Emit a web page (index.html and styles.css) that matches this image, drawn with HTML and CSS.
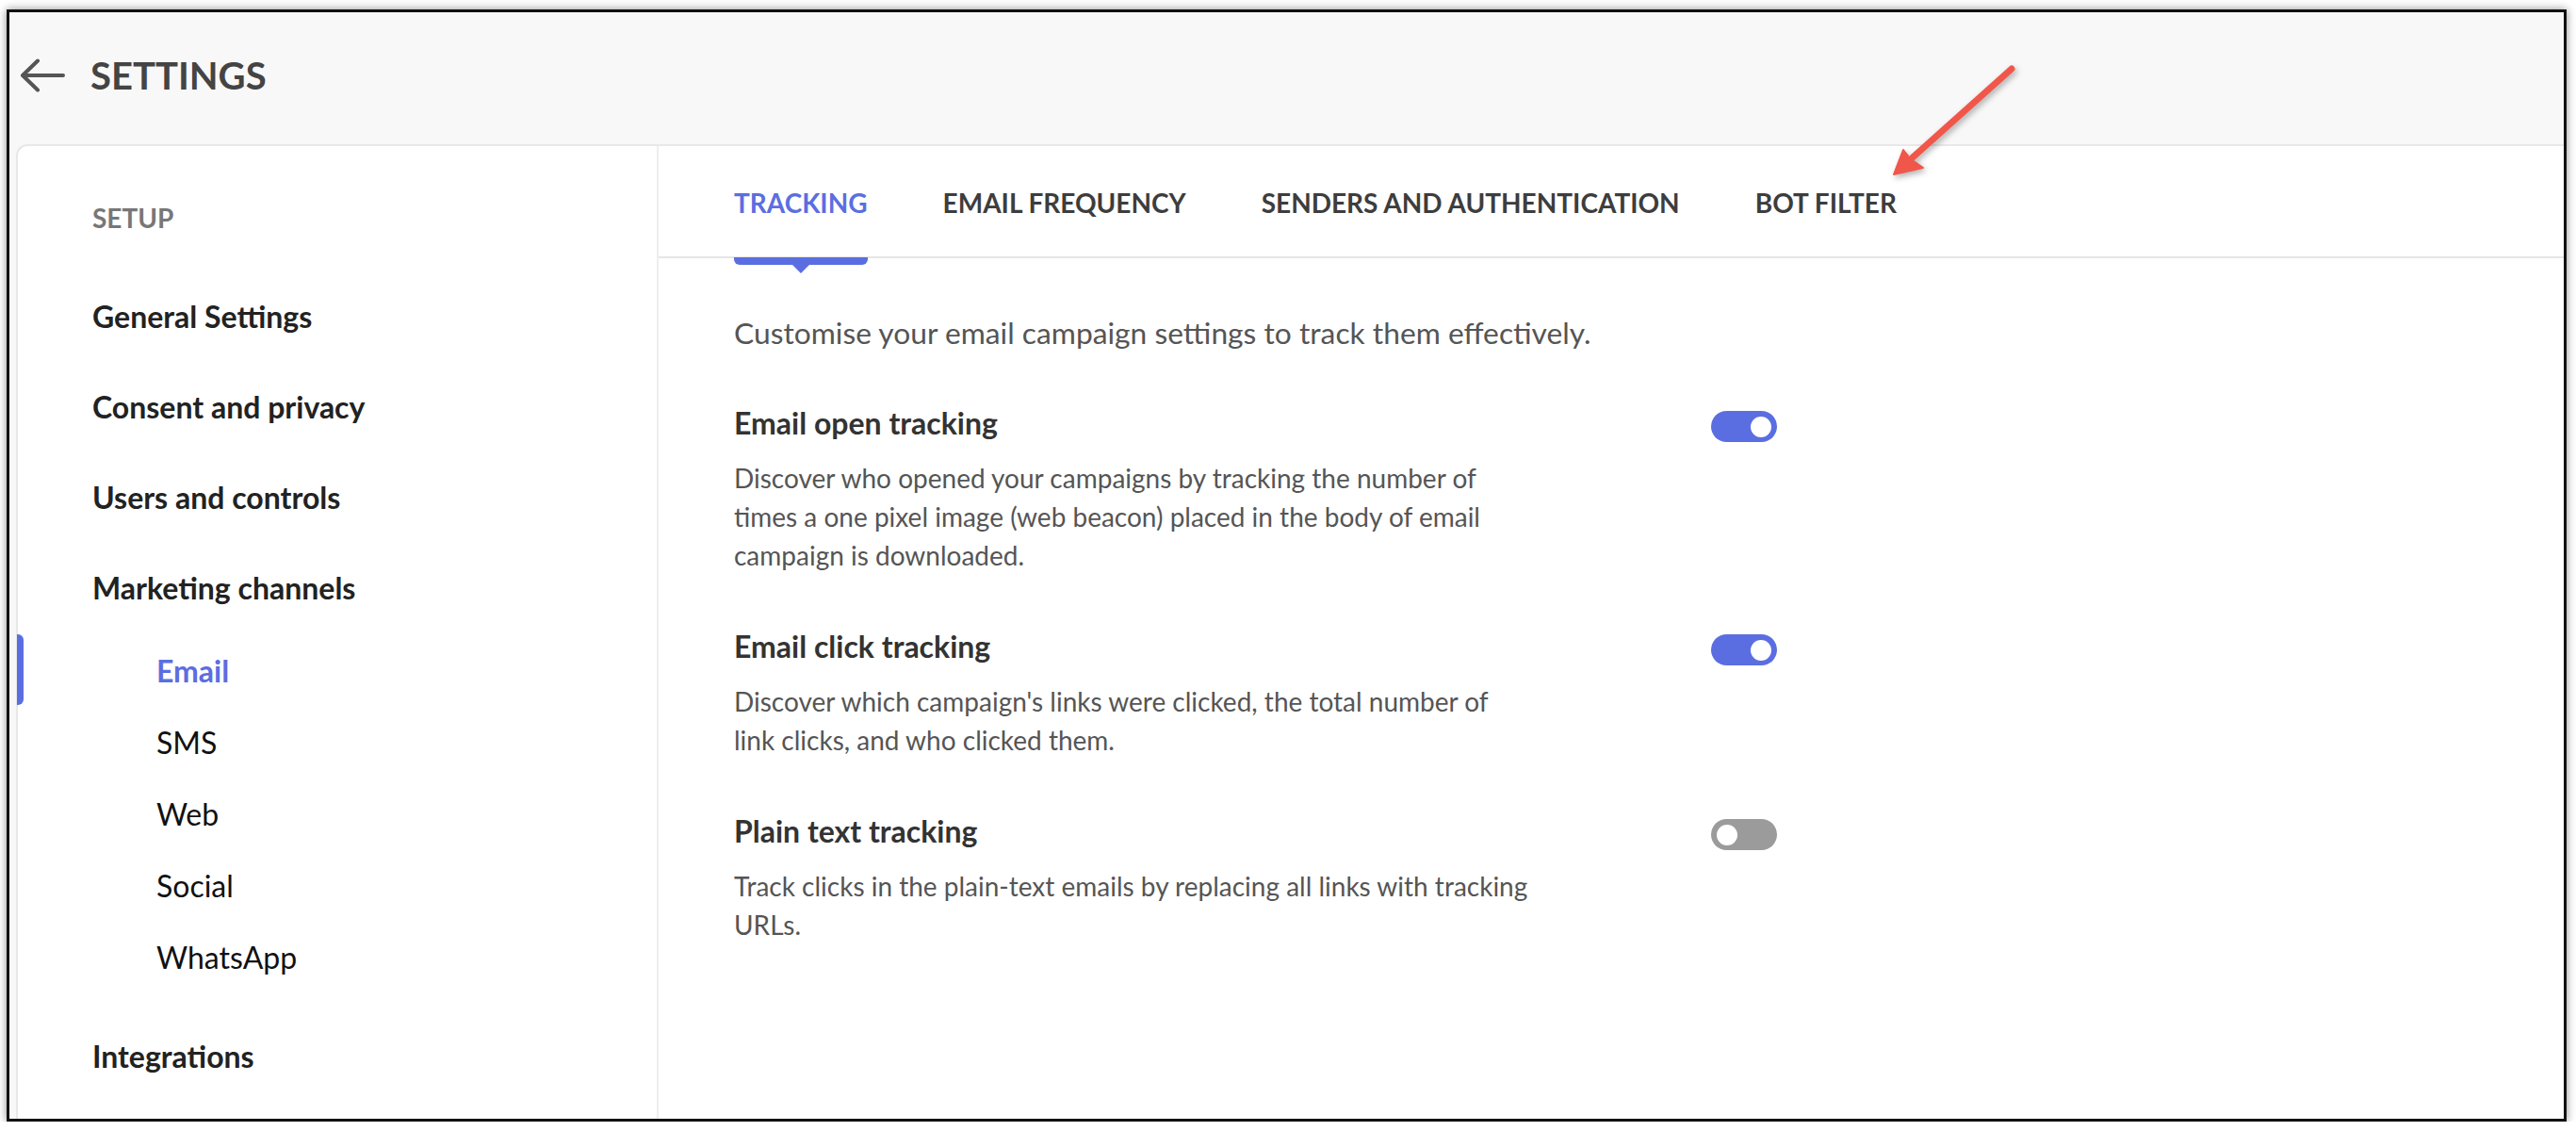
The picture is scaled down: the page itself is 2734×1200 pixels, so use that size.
FILE: index.html
```html
<!DOCTYPE html>
<html lang="en">
<head>
    <meta charset="UTF-8">
    <meta name="viewport" content="width=device-width, initial-scale=1.0">
    <title>Settings - Email</title>
    <link rel="stylesheet" href="styles.css">
</head>
<body>
    <div class="frame">
        <div class="topbar">
            <a class="back" href="#">
                <svg width="48" height="36" viewBox="0 0 48 36">
                    <path d="M46 18 H4 M19 2.5 L3 18 L19 33.5" fill="none" stroke="#555" stroke-width="4" stroke-linecap="round" stroke-linejoin="round"/>
                </svg>
            </a>
            <h1 class="title">SETTINGS</h1>
        </div>

        <div class="card">
            <!-- left menu -->
            <div class="sidebar">
                <div class="nav-label">SETUP</div>
                <ul class="nav">
                    <li class="nav-item">General Settings</li>
                    <li class="nav-item">Consent and privacy</li>
                    <li class="nav-item">Users and controls</li>
                    <li class="nav-item">Marketing channels</li>
                </ul>
                <ul class="subnav">
                    <li class="sub-item active">Email</li>
                    <li class="sub-item">SMS</li>
                    <li class="sub-item">Web</li>
                    <li class="sub-item">Social</li>
                    <li class="sub-item">WhatsApp</li>
                </ul>
                <ul class="nav nav-last">
                    <li class="nav-item">Integrations</li>
                </ul>
            </div>

            <!-- right side -->
            <div class="content">
                <ul class="tabs">
                    <li class="tab current">TRACKING</li>
                    <li class="tab">EMAIL FREQUENCY</li>
                    <li class="tab">SENDERS AND AUTHENTICATION</li>
                    <li class="tab">BOT FILTER</li>
                </ul>

                <div class="panel">
                    <p class="intro">Customise your email campaign settings to track them effectively.</p>

                    <div class="setting">
                        <div class="setting-text">
                            <h3>Email open tracking</h3>
                            <p>Discover who opened your campaigns by tracking the number of times a one pixel image (web beacon) placed in the body of email campaign is downloaded.</p>
                        </div>
                        <span class="toggle on"></span>
                    </div>

                    <div class="setting">
                        <div class="setting-text">
                            <h3>Email click tracking</h3>
                            <p>Discover which campaign's links were clicked, the total number of link clicks, and who clicked them.</p>
                        </div>
                        <span class="toggle on"></span>
                    </div>

                    <div class="setting">
                        <div class="setting-text">
                            <h3>Plain text tracking</h3>
                            <p>Track clicks in the plain-text emails by replacing all links with tracking URLs.</p>
                        </div>
                        <span class="toggle"></span>
                    </div>
                </div>
            </div>
        </div>
    </div>

    <!-- red pointer over the tabs -->
    <svg class="pointer" width="170" height="160" viewBox="1990 50 170 160">
        <line x1="2135" y1="73" x2="2030" y2="167" stroke="#f0574a" stroke-width="7" stroke-linecap="round"/>
        <polygon points="2010,185 2020,159 2028,169 2041,178" fill="#f0574a" stroke="#f0574a" stroke-width="2" stroke-linejoin="round"/>
    </svg>
</body>
</html>
```

FILE: styles.css
```css
*{
    margin: 0;
    padding: 0;
    box-sizing: border-box;
}

ul{
    list-style-type: none;
}

body{
    background: #ffffff;
    font-family: Lato, "Open Sans", sans-serif;
    position: relative;
}

.frame{
    width: 2717px;
    height: 1180px;
    margin: 10px 0 0 7px;
    border: 3px solid #111111;
    box-shadow: 0 0 9px rgba(0,0,0,0.45);
    background: #f8f8f8;
    display: flex;
    flex-direction: column;
    overflow: hidden;
}

/* top bar */
.topbar{
    height: 140px;
    flex-shrink: 0;
    display: flex;
    align-items: center;
    padding: 0 0 6px 11px;
}

.back{
    display: flex;
    width: 48px;
    height: 36px;
}

.title{
    margin-left: 27px;
    font-size: 40px;
    font-weight: 700;
    color: #444444;
}

/* white card under the top bar */
.card{
    flex: 1;
    margin-left: 7px;
    background: #ffffff;
    border-top: 2px solid #e8e8e8;
    border-left: 2px solid #e8e8e8;
    border-top-left-radius: 12px;
    display: flex;
}

.sidebar{
    width: 680px;
    flex-shrink: 0;
    border-right: 2px solid #eeeeee;
    padding-top: 60px;
}

.nav-label{
    padding-left: 79px;
    font-size: 28px;
    line-height: 32px;
    font-weight: 700;
    color: #777777;
    margin-bottom: 40px;
}

.nav-item{
    height: 96px;
    display: flex;
    align-items: center;
    padding-left: 79px;
    font-size: 32px;
    font-weight: 700;
    color: #222222;
}

.nav-last{
    margin-top: 19px;
}

.subnav{
    margin-top: 2px;
}

.sub-item{
    position: relative;
    height: 76px;
    display: flex;
    align-items: center;
    padding-left: 147px;
    font-size: 32px;
    color: #111111;
}

.sub-item.active{
    color: #5b6ee1;
    font-weight: 700;
}

.sub-item.active::before{
    content: "";
    position: absolute;
    left: -1px;
    top: 50%;
    width: 7px;
    height: 75px;
    margin-top: -38px;
    background: #5b6ee1;
    border-radius: 0 6px 6px 0;
}

/* tabs + panel */
.content{
    flex: 1;
}

.tabs{
    height: 119px;
    border-bottom: 2px solid #e6e6e6;
    display: flex;
    gap: 80px;
    padding: 2px 0 0 80px;
}

.tab{
    position: relative;
    display: flex;
    align-items: center;
    font-size: 28px;
    font-weight: 700;
    color: #3d3d3d;
}

.tab.current{
    color: #5b6ee1;
}

.tab.current::after{
    content: "";
    position: absolute;
    left: 0;
    right: 0;
    top: 100%;
    height: 8px;
    margin-top: 1px;
    background: #5b6ee1;
    border-radius: 0 0 6px 6px;
}

.tab.current::before{
    content: "";
    position: absolute;
    left: 50%;
    top: 100%;
    margin: 8px 0 0 -10px;
    border-left: 10px solid transparent;
    border-right: 10px solid transparent;
    border-top: 10px solid #5b6ee1;
}

.panel{
    padding: 59px 0 0 80px;
    width: 1187px;
}

.intro{
    font-size: 31.75px;
    line-height: 40px;
    color: #555555;
    margin-bottom: 56px;
}

.setting{
    display: flex;
    justify-content: space-between;
    align-items: flex-start;
    margin-bottom: 56px;
}

.setting-text h3{
    font-size: 32px;
    line-height: 40px;
    font-weight: 700;
    color: #333333;
}

.setting-text p{
    max-width: 846px;
    margin-top: 18px;
    font-size: 28px;
    line-height: 41px;
    color: #555555;
}

.toggle{
    position: relative;
    flex-shrink: 0;
    width: 70px;
    height: 33px;
    margin-top: 7px;
    border-radius: 17px;
    background: #9b9b9b;
}

.toggle::after{
    content: "";
    position: absolute;
    top: 5.5px;
    left: 6px;
    width: 22px;
    height: 22px;
    border-radius: 50%;
    background: #ffffff;
}

.toggle.on{
    background: #5b6ee1;
}

.toggle.on::after{
    left: auto;
    right: 6px;
}

.pointer{
    position: absolute;
    left: 1990px;
    top: 50px;
    filter: drop-shadow(2px 3px 3px rgba(0,0,0,0.3));
}
```
